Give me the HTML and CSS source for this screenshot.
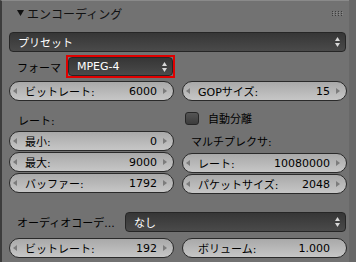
FILE: index.html
```html
<!DOCTYPE html>
<html lang="ja">
<head>
    <meta charset="UTF-8">
    <meta name="viewport" content="width=device-width, initial-scale=1.0">
    <title>エンコーディング</title>
    <link rel="stylesheet" href="styles.css">
</head>
<body>
    <div class="panel">
        <div class="panel-header">
            <svg class="disclosure" width="7" height="6" viewBox="0 0 7 6"><polygon points="0,0 7,0 3.5,6" fill="#111"/></svg>
            <span class="panel-title">エンコーディング</span>
            <svg class="grip" width="11" height="5" viewBox="0 0 11 5">
                <g fill="#3c3c3c">
                    <rect x="0" y="0" width="1" height="1"/><rect x="3" y="0" width="1" height="1"/><rect x="6" y="0" width="1" height="1"/><rect x="9" y="0" width="1" height="1"/>
                    <rect x="0" y="2" width="1" height="1"/><rect x="3" y="2" width="1" height="1"/><rect x="6" y="2" width="1" height="1"/><rect x="9" y="2" width="1" height="1"/>
                    <rect x="0" y="4" width="1" height="1"/><rect x="3" y="4" width="1" height="1"/><rect x="6" y="4" width="1" height="1"/><rect x="9" y="4" width="1" height="1"/>
                </g>
                <g fill="#8a8a8a">
                    <rect x="1" y="1" width="1" height="1"/><rect x="4" y="1" width="1" height="1"/><rect x="7" y="1" width="1" height="1"/><rect x="10" y="1" width="1" height="1"/>
                    <rect x="1" y="3" width="1" height="1"/><rect x="4" y="3" width="1" height="1"/><rect x="7" y="3" width="1" height="1"/><rect x="10" y="3" width="1" height="1"/>
                </g>
            </svg>
        </div>

        <div class="panel-body">
            <div class="menu preset">
                <span class="menu-text">プリセット</span>
                <svg class="updown" width="5" height="10" viewBox="0 0 5 10"><polygon points="2.5,0 5,4 0,4" fill="#d8d8d8"/><polygon points="0,6 5,6 2.5,10" fill="#d8d8d8"/></svg>
            </div>

            <div class="prop-row format-row">
                <span class="prop-label format-label">フォーマ</span>
                <div class="highlight-box">
                    <div class="menu">
                        <span class="menu-text">MPEG-4</span>
                        <svg class="updown" width="5" height="10" viewBox="0 0 5 10"><polygon points="2.5,0 5,4 0,4" fill="#d8d8d8"/><polygon points="0,6 5,6 2.5,10" fill="#d8d8d8"/></svg>
                    </div>
                </div>
            </div>

            <div class="split">
                <div class="col">
                    <div class="num"><i class="arr left"></i><span class="num-label">ビットレート:</span><span class="num-value">6000</span><i class="arr right"></i></div>
                    <div class="col-label rate-label">レート:</div>
                    <div class="num"><i class="arr left"></i><span class="num-label">最小:</span><span class="num-value">0</span><i class="arr right"></i></div>
                    <div class="num"><i class="arr left"></i><span class="num-label">最大:</span><span class="num-value">9000</span><i class="arr right"></i></div>
                    <div class="num"><i class="arr left"></i><span class="num-label">バッファー:</span><span class="num-value">1792</span><i class="arr right"></i></div>
                </div>
                <div class="col">
                    <div class="num"><i class="arr left"></i><span class="num-label">GOPサイズ:</span><span class="num-value">15</span><i class="arr right"></i></div>
                    <label class="check-row"><span class="checkbox"></span><span class="check-text">自動分離</span></label>
                    <div class="col-label mux-label">マルチプレクサ:</div>
                    <div class="num mux-rate"><i class="arr left"></i><span class="num-label">レート:</span><span class="num-value">10080000</span><i class="arr right"></i></div>
                    <div class="num"><i class="arr left"></i><span class="num-label">パケットサイズ:</span><span class="num-value">2048</span><i class="arr right"></i></div>
                </div>
            </div>

            <div class="prop-row audio-row">
                <span class="prop-label audio-label">オーディオコーデ...</span>
                <div class="menu">
                    <span class="menu-text">なし</span>
                    <svg class="updown" width="5" height="10" viewBox="0 0 5 10"><polygon points="2.5,0 5,4 0,4" fill="#d8d8d8"/><polygon points="0,6 5,6 2.5,10" fill="#d8d8d8"/></svg>
                </div>
            </div>

            <div class="split bottom-split">
                <div class="num"><i class="arr left"></i><span class="num-label">ビットレート:</span><span class="num-value">192</span><i class="arr right"></i></div>
                <div class="num slider"><span class="num-label">ボリューム:</span><span class="num-value">1.000</span></div>
            </div>
        </div>
    </div>
    <div class="next-panel"></div>
</body>
</html>
```

FILE: styles.css
```css
body {
    margin: 0;
    background-color: #686868;
    font-family: "DejaVu Sans", "Noto Sans CJK JP", sans-serif;
    font-size: 11px;
    color: #000000;
}
.panel {
    width: 347px;
    border-left: 2px solid #3c3c3c;
    border-top: 1px solid #8a8a8a;
    background-color: #727272;
}
.panel-header {
    display: flex;
    align-items: center;
    height: 24px;
    padding-left: 15px;
    padding-right: 5px;
    font-size: 12px;
    color: #111111;
}
.disclosure {
    margin-right: 3px;
}
.panel-title {
    flex: 1;
}
.grip {
    margin-right: 1px;
}
.panel-body {
    padding: 7px 0 3px 7px;
}

/* dropdown menus */
.menu {
    display: flex;
    align-items: center;
    box-sizing: border-box;
    height: 20px;
    padding: 0 5px 0 8px;
    border: 1px solid #262626;
    border-radius: 4px;
    background: linear-gradient(#363636, #4a4a4a);
    color: #ffffff;
}
.menu-text {
    flex: 1;
}
.preset {
    width: 337px;
}
.prop-row {
    display: flex;
    align-items: center;
    height: 20px;
}
.prop-label {
    padding-left: 8px;
}
.format-row {
    height: auto;
    margin-top: 3px;
}
.format-label {
    width: 49px;
}
.highlight-box {
    border: 2px solid #e00000;
}
.highlight-box .menu {
    width: 105px;
    height: 19px;
}
.audio-row {
    margin-top: 17px;
}
.audio-label {
    width: 108px;
}
.audio-row .menu {
    width: 221px;
}

/* two column block */
.split {
    display: grid;
    grid-template-columns: 165px 165px;
    column-gap: 8px;
    margin-top: 3px;
}
.col {
    display: flex;
    flex-direction: column;
}
.bottom-split {
    margin-top: 6px;
}

/* number fields */
.num {
    display: flex;
    align-items: center;
    box-sizing: border-box;
    height: 20px;
    margin-bottom: 1px;
    padding: 0 6px 0 3px;
    border: 1px solid #2a2a2a;
    border-radius: 10px;
    background: linear-gradient(#a9a9a9, #c6c6c6);
}
.num-label {
    margin-left: 8px;
    flex: 1;
    white-space: nowrap;
}
.num-value {
    margin-right: 6px;
}
.num.slider {
    padding: 0 16px 0 7px;
}
.num.slider .num-value {
    margin-right: 0;
}
.arr {
    width: 0;
    height: 0;
    border-top: 3px solid transparent;
    border-bottom: 3px solid transparent;
}
.arr.left {
    border-right: 4px solid #7c7c7c;
}
.arr.right {
    border-left: 4px solid #7c7c7c;
}

.col-label {
    display: flex;
    align-items: center;
    height: 20px;
    padding-left: 9px;
}
.rate-label {
    margin-top: 8px;
    margin-bottom: 1px;
}
.check-row {
    display: flex;
    align-items: center;
    height: 20px;
    margin-top: 6px;
    padding-left: 3px;
}
.checkbox {
    box-sizing: border-box;
    width: 14px;
    height: 13px;
    border: 1px solid #262626;
    border-radius: 3px;
    background: linear-gradient(#555555, #3c3c3c);
}
.check-text {
    margin-left: 9px;
}
.mux-label {
    margin-top: 3px;
}
.mux-rate {
    margin-top: 2px;
}

.next-panel {
    width: 347px;
    height: 10px;
    border-left: 2px solid #3c3c3c;
    border-top: 2px solid #474747;
    background-color: #727272;
}
```
